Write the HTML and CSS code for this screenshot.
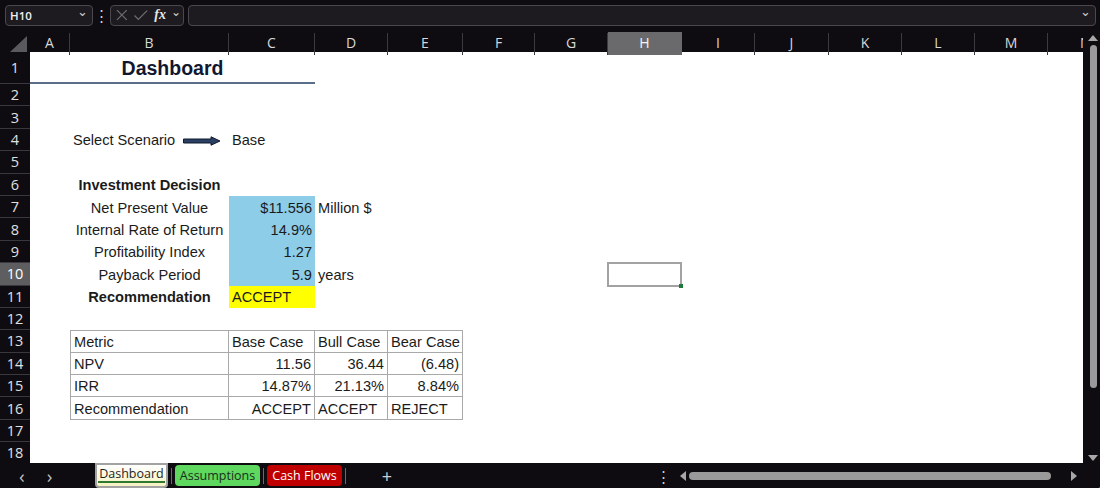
FILE: index.html
```html
<!DOCTYPE html>
<html>
<head>
<meta charset="utf-8">
<link rel="stylesheet" href="styles.css">
</head>
<body>
<div class="app">
  <div class="fbar">
    <div class="namebox"><span class="nb-text">H10</span><span class="chev">&#8964;</span></div>
    <div class="vdots">&#8942;</div>
    <div class="fxbox">
      <svg class="ic" width="14" height="14" viewBox="0 0 14 14"><path d="M2 2 L12 12 M12 2 L2 12" stroke="#6e6c72" stroke-width="1.3" fill="none"/></svg>
      <svg class="ic" width="16" height="14" viewBox="0 0 16 14"><path d="M1.5 7.5 L5.5 11.5 L14.5 2.5" stroke="#6e6c72" stroke-width="1.3" fill="none"/></svg>
      <span class="fx">fx</span><span class="chev small">&#8964;</span>
    </div>
    <div class="finput"><span class="chev">&#8964;</span></div>
  </div>
  <div class="main">
    <div class="sheet">
      <div class="row hdr">
        <div class="corner"><svg width="18" height="16" viewBox="0 0 18 16"><path d="M17 0 L17 16 L0 16 Z" fill="#5a5a5e"/></svg></div>
        <div class="ch">A</div><div class="ch">B</div><div class="ch">C</div><div class="ch">D</div><div class="ch">E</div><div class="ch">F</div><div class="ch">G</div><div class="ch sel">H</div><div class="ch">I</div><div class="ch">J</div><div class="ch">K</div><div class="ch">L</div><div class="ch">M</div><div class="ch last">N</div>
      </div>
      <div class="row r-tall"><div class="rh">1</div><div class="cell title">Dashboard</div></div>
      <div class="row"><div class="rh">2</div></div>
      <div class="row"><div class="rh">3</div></div>
      <div class="row"><div class="rh">4</div>
        <div class="cell cB scen">Select Scenario
          <svg class="arrow" width="38" height="10" viewBox="0 0 38 10"><path d="M0.5 3 L28 3 L28 0.8 L37 5 L28 9.2 L28 7 L0.5 7 Z" fill="#2b3f63" stroke="#0f1a2e" stroke-width="1"/></svg>
        </div>
        <div class="cell cC">Base</div>
      </div>
      <div class="row"><div class="rh">5</div></div>
      <div class="row"><div class="rh">6</div><div class="cell cB center bold">Investment Decision</div></div>
      <div class="row"><div class="rh">7</div><div class="cell cB center">Net Present Value</div><div class="cell cC right blue">$11.556</div><div class="cell cD">Million $</div></div>
      <div class="row"><div class="rh">8</div><div class="cell cB center">Internal Rate of Return</div><div class="cell cC right blue">14.9%</div></div>
      <div class="row"><div class="rh">9</div><div class="cell cB center">Profitability Index</div><div class="cell cC right blue">1.27</div></div>
      <div class="row"><div class="rh selr">10</div><div class="cell cB center">Payback Period</div><div class="cell cC right blue">5.9</div><div class="cell cD">years</div><div class="cell cH active"></div></div>
      <div class="row"><div class="rh">11</div><div class="cell cB center bold">Recommendation</div><div class="cell cC yellow">ACCEPT</div></div>
      <div class="row"><div class="rh">12</div></div>
      <div class="row"><div class="rh">13</div><div class="cell cB tb tl tt">Metric</div><div class="cell cC tb tt">Base Case</div><div class="cell cD tb tt">Bull Case</div><div class="cell cE tb tt">Bear Case</div></div>
      <div class="row"><div class="rh">14</div><div class="cell cB tb tl">NPV</div><div class="cell cC tb right">11.56</div><div class="cell cD tb right">36.44</div><div class="cell cE tb right">(6.48)</div></div>
      <div class="row"><div class="rh">15</div><div class="cell cB tb tl">IRR</div><div class="cell cC tb right">14.87%</div><div class="cell cD tb right">21.13%</div><div class="cell cE tb right">8.84%</div></div>
      <div class="row"><div class="rh">16</div><div class="cell cB tb tl">Recommendation</div><div class="cell cC tb right">ACCEPT</div><div class="cell cD tb">ACCEPT</div><div class="cell cE tb">REJECT</div></div>
      <div class="row"><div class="rh">17</div></div>
      <div class="row"><div class="rh">18</div></div>
    </div>
    <div class="vscroll">
      <span class="tri up"></span>
      <div class="vthumb"></div>
      <span class="tri down"></span>
    </div>
  </div>
  <div class="tabbar">
    <div class="nav"><span>&#8249;</span><span>&#8250;</span></div>
    <div class="tabs">
      <div class="tab active"><span>Dashboard</span></div>
      <div class="sep"></div>
      <div class="tab green">Assumptions</div>
      <div class="sep"></div>
      <div class="tab red">Cash Flows</div>
      <div class="sep"></div>
      <div class="plus">+</div>
    </div>
    <div class="hdots">&#8942;</div>
    <div class="hscroll">
      <span class="tri left"></span>
      <div class="hthumb"></div>
      <span class="tri right"></span>
    </div>
  </div>
</div>
</body>
</html>
```
FILE: styles.css
```css
* { box-sizing: border-box; }
html, body { margin: 0; padding: 0; }
body {
  width: 1100px;
  height: 488px;
  overflow: hidden;
  background: #0e0c10;
  font-family: "Liberation Sans", Arial, sans-serif;
}
.app { width: 1100px; height: 488px; display: flex; flex-direction: column; }

/* formula bar */
.fbar {
  height: 30px;
  display: flex;
  align-items: center;
  padding: 0 4px 0 5px;
  font-family: "Open Sans", "Noto Sans", sans-serif;
}
.namebox, .fxbox, .finput {
  height: 21px;
  background: #1d1b20;
  border: 1px solid #4a484e;
  border-radius: 4px;
  display: flex;
  align-items: center;
}
.namebox { width: 88px; padding: 0 4px 0 4px; justify-content: space-between; }
.nb-text { color: #f0f0f0; font-size: 11.5px; font-weight: 600; }
.chev { color: #cfcfcf; font-size: 13px; line-height: 1; margin-top: -7px; }
.chev.small { font-size: 12px; margin-left: 1px; }
.vdots { color: #cfcfcf; font-size: 15px; width: 17px; text-align: center; }
.fxbox { width: 74px; padding: 0 2px 0 4px; gap: 4px; color: #6e6c72; }
.fx { color: #e6e6e6; font-family: "Liberation Serif", serif; font-style: italic; font-weight: bold; font-size: 14px; margin-left: 2px; }
.finput { flex: 1; margin-left: 4px; justify-content: flex-end; padding-right: 4px; }

/* main */
.main { flex: 1; display: flex; min-height: 0; }
.sheet { width: 1083px; overflow: hidden; background: #ffffff; }
.row {
  display: grid;
  grid-template-columns: 30px 40px 159px 86px 73px 75px 72px 73px 74px 73px 74px 73px 73px 73px 35px;
  height: 22.4px;
}
.row.hdr { height: 22px; background: #0e0c10; }
.row.r-tall { height: 32px; }
.corner { grid-column: 1; display: flex; align-items: flex-end; justify-content: flex-end; padding: 0 2px 3px 0; }
.ch {
  color: #d8d8d8;
  font-family: "Open Sans", "Noto Sans", sans-serif;
  font-size: 14px;
  display: flex; align-items: center; justify-content: center;
  border-right: 1px solid #3c3a40;
  margin-top: 3px;
  padding-bottom: 3px;
}
.ch.sel { background: #6a6a6c; color: #f4f4f4; border-right-color: #6a6a6c; margin-top: 2px; padding-bottom: 2px; }
.ch.last { justify-content: flex-start; padding-left: 32px; border-right: 0; overflow: hidden; }
.rh {
  grid-column: 1;
  background: #0e0c10;
  color: #e0e0e0;
  font-family: "Open Sans", "Noto Sans", sans-serif;
  font-size: 14.5px;
  display: flex; align-items: center; justify-content: center;
  border-bottom: 1px solid #3a383e;
}
.rh.selr { background: #5e5e60; color: #ffffff; }

.cell {
  font-size: 14.6px;
  color: #1b1b1b;
  display: flex;
  align-items: center;
  padding: 1px 3px 0 3px;
  white-space: nowrap;
  position: relative;
}
.cA { grid-column: 2; }
.cB { grid-column: 3; }
.cC { grid-column: 4; }
.cD { grid-column: 5; }
.cE { grid-column: 6; }
.cH { grid-column: 9; }
.center { justify-content: center; }
.right { justify-content: flex-end; }
.bold { font-weight: bold; }
.title {
  grid-column: 2 / 5;
  justify-content: center;
  font-size: 19.5px;
  font-weight: bold;
  color: #121730;
  border-bottom: 2px solid #5a6e8a;
  padding-top: 2px;
}
.scen { padding-left: 3px; }
.arrow { margin-left: 8px; margin-top: 1px; }
.blue { background: #8ecde8; }
.yellow { background: #ffff00; }
.tb { border-right: 1px solid #a9a9a9; border-bottom: 1px solid #a9a9a9; }
.tl { border-left: 1px solid #a9a9a9; }
.tt { border-top: 1px solid #a9a9a9; }
.active {
  border: 2px solid #a2a2a2;
  margin: -1px 0 -1px -1px;
}
.active::after {
  content: "";
  position: absolute;
  right: -3px;
  bottom: -3px;
  width: 4px;
  height: 4px;
  background: #1e7a3a;
}

/* vertical scroll */
.vscroll {
  width: 17px;
  background: #0e0c10;
  display: flex;
  flex-direction: column;
  align-items: center;
  padding: 5px 0 2px 3px;
}
.tri { width: 0; height: 0; display: block; }
.tri.up { border-left: 5px solid transparent; border-right: 5px solid transparent; border-bottom: 6px solid #a8a8a8; }
.tri.down { border-left: 5px solid transparent; border-right: 5px solid transparent; border-top: 6px solid #a8a8a8; margin-top: auto; }
.vthumb { width: 7px; height: 343px; background: #9a9a9a; border-radius: 4px; margin-top: 4px; }

/* tab bar */
.tabbar {
  height: 25px;
  display: flex;
  align-items: center;
  font-family: "Open Sans", "Noto Sans", sans-serif;
}
.nav { width: 96px; display: flex; gap: 22px; padding-left: 19px; color: #bdbdbd; font-size: 19px; align-items: center; height: 25px; }
.tabs { display: flex; align-items: center; height: 25px; }
.tab { font-size: 12.5px; height: 21px; display: flex; align-items: center; justify-content: center; border-radius: 4px; }
.tab.active {
  width: 73px;
  height: 25px;
  margin-top: -2px;
  background: linear-gradient(#ffffff, #f6f2c0);
  border-radius: 0 0 4px 4px;
  color: #1e1e1e;
}
.tab.active span { border-bottom: 2px solid #2f7a2f; line-height: 14px; padding: 0 1px 0 1px; }
.tab.green { width: 85px; background: #5ed85e; color: #1a2e1a; }
.tab.red { width: 75px; background: #c00000; color: #ffffff; }
.sep { width: 1px; height: 16px; background: #6a6a6a; margin: 0 3px; }
.plus { color: #d0d0d0; font-size: 18px; width: 80px; text-align: center; margin-left: -2px; }
.hdots { color: #cfcfcf; font-size: 15px; margin-left: 228px; width: 16px; text-align: center; }
.hscroll { display: flex; align-items: center; margin-left: 9px; width: 400px; }
.tri.left { border-top: 5px solid transparent; border-bottom: 5px solid transparent; border-right: 6px solid #a8a8a8; }
.hthumb { width: 362px; height: 8px; background: #9a9a9a; border-radius: 4px; margin-left: 3px; }
.tri.right { border-top: 5px solid transparent; border-bottom: 5px solid transparent; border-left: 6px solid #a8a8a8; margin-left: 20px; }
```
